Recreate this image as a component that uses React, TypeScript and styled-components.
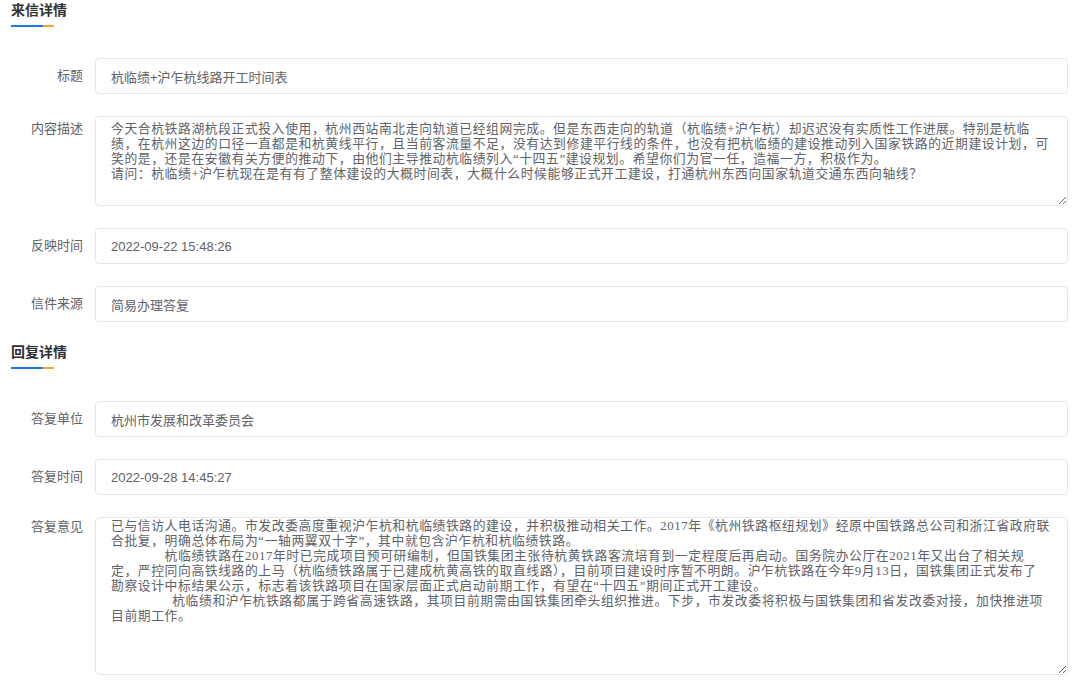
import React from 'react';
import styled, { createGlobalStyle } from 'styled-components';

const GlobalStyle = createGlobalStyle`
  html, body {
    margin: 0;
    padding: 0;
    background: #ffffff;
  }
  body {
    font-family: "Liberation Sans", "Noto Sans CJK SC", sans-serif;
  }
`;

const Page = styled.div`
  width: 1080px;
  padding: 0 12px 0 11px;
  box-sizing: border-box;
`;

const Section = styled.section<{ $top?: number }>`
  margin-top: ${(p) => p.$top ?? 0}px;
`;

const SectionTitle = styled.h2`
  margin: 0;
  font-size: 14px;
  line-height: 18px;
  font-weight: bold;
  color: #303133;
  font-family: "Noto Sans CJK SC", sans-serif;
`;

const TitleBar = styled.div`
  display: flex;
  margin-top: 7px;
  height: 2px;
  width: 43px;
  &::before {
    content: '';
    width: 32px;
    background: #1f7ae8;
  }
  &::after {
    content: '';
    flex: 1;
    background: #f3a42b;
  }
`;

const Form = styled.div<{ $top: number }>`
  margin-top: ${(p) => p.$top}px;
  display: flex;
  flex-direction: column;
  gap: 22px;
`;

const Row = styled.div<{ $top?: boolean }>`
  display: flex;
  align-items: ${(p) => (p.$top ? 'flex-start' : 'center')};
`;

const Label = styled.label<{ $pad?: number }>`
  width: 72px;
  padding-right: 12px;
  padding-top: ${(p) => p.$pad ?? 0}px;
  text-align: right;
  font-size: 13px;
  line-height: 18px;
  color: #606266;
  flex-shrink: 0;
`;

const Input = styled.input`
  flex: 1;
  height: 36px;
  box-sizing: border-box;
  padding: 0 15px;
  border: 1px solid #e4e7ed;
  border-radius: 4px;
  font-family: "Liberation Sans", "Noto Sans CJK SC", sans-serif;
  font-size: 13px;
  color: #606266;
  background: #fff;
  outline: none;
`;

const TextArea = styled.textarea<{ $h: number; $pad: number }>`
  flex: 1;
  height: ${(p) => p.$h}px;
  box-sizing: border-box;
  padding: ${(p) => p.$pad}px 15px 0;
  border: 1px solid #e4e7ed;
  border-radius: 4px;
  font-family: "Liberation Serif", "Noto Sans CJK SC", serif;
  font-size: 12.8px;
  letter-spacing: 0.6px;
  line-height: 15px;
  color: #606266;
  background: #fff;
  outline: none;
  overflow: hidden;
  resize: vertical;
`;

const IND = '\u3000\u3000\u3000\u3000';

const letterText = [
  '今天合杭铁路湖杭段正式投入使用，杭州西站南北走向轨道已经组网完成。但是东西走向的轨道（杭临绩+沪乍杭）却迟迟没有实质性工作进展。特别是杭临',
  '绩，在杭州这边的口径一直都是和杭黄线平行，且当前客流量不足，没有达到修建平行线的条件，也没有把杭临绩的建设推动列入国家铁路的近期建设计划，可',
  '笑的是，还是在安徽有关方便的推动下，由他们主导推动杭临绩列入“十四五”建设规划。希望你们为官一任，造福一方，积极作为。',
  '请问：杭临绩+沪乍杭现在是有有了整体建设的大概时间表，大概什么时候能够正式开工建设，打通杭州东西向国家轨道交通东西向轴线？',
].join('\n');

const replyText = [
  '已与信访人电话沟通。市发改委高度重视沪乍杭和杭临绩铁路的建设，并积极推动相关工作。2017年《杭州铁路枢纽规划》经原中国铁路总公司和浙江省政府联',
  '合批复，明确总体布局为“一轴两翼双十字”，其中就包含沪乍杭和杭临绩铁路。',
  IND + '杭临绩铁路在2017年时已完成项目预可研编制，但国铁集团主张待杭黄铁路客流培育到一定程度后再启动。国务院办公厅在2021年又出台了相关规',
  '定，严控同向高铁线路的上马（杭临绩铁路属于已建成杭黄高铁的取直线路），目前项目建设时序暂不明朗。沪乍杭铁路在今年9月13日，国铁集团正式发布了',
  '勘察设计中标结果公示，标志着该铁路项目在国家层面正式启动前期工作，有望在“十四五”期间正式开工建设。',
  IND + '  杭临绩和沪乍杭铁路都属于跨省高速铁路，其项目前期需由国铁集团牵头组织推进。下步，市发改委将积极与国铁集团和省发改委对接，加快推进项',
  '目前期工作。',
].join('\n');

export default function App() {
  return (
    <>
      <GlobalStyle />
      <Page>
        <Section>
          <SectionTitle>来信详情</SectionTitle>
          <TitleBar />
          <Form $top={31}>
            <Row>
              <Label>标题</Label>
              <Input readOnly value="杭临绩+沪乍杭线路开工时间表" />
            </Row>
            <Row $top>
              <Label $pad={4}>内容描述</Label>
              <TextArea readOnly $h={90} $pad={5} value={letterText} />
            </Row>
            <Row>
              <Label>反映时间</Label>
              <Input readOnly value="2022-09-22 15:48:26" />
            </Row>
            <Row>
              <Label>信件来源</Label>
              <Input readOnly value="简易办理答复" />
            </Row>
          </Form>
        </Section>

        <Section $top={20}>
          <SectionTitle>回复详情</SectionTitle>
          <TitleBar />
          <Form $top={32}>
            <Row>
              <Label>答复单位</Label>
              <Input readOnly value="杭州市发展和改革委员会" />
            </Row>
            <Row>
              <Label>答复时间</Label>
              <Input readOnly value="2022-09-28 14:45:27" />
            </Row>
            <Row $top>
              <Label $pad={1}>答复意见</Label>
              <TextArea readOnly $h={158} $pad={1} value={replyText} />
            </Row>
          </Form>
        </Section>
      </Page>
    </>
  );
}
